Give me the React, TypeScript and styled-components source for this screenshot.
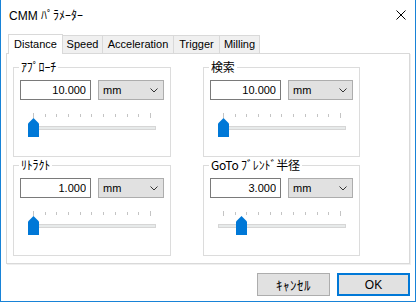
import React from "react";
import styled, { createGlobalStyle } from "styled-components";

const GlobalStyle = createGlobalStyle`
  html, body { margin: 0; padding: 0; background: #fff; }
  body {
    font-family: "Liberation Sans", "Noto Sans CJK JP", sans-serif;
    font-size: 11px;
    color: #000;
  }
  * { box-sizing: border-box; }
`;

const Window = styled.div`
  width: 416px;
  height: 302px;
  background: #fff;
  border: 1px solid #1883d7;
  border-top: none;
  display: flex;
  flex-direction: column;
`;

const TitleBar = styled.div`
  height: 34px;
  display: flex;
  justify-content: space-between;
  align-items: flex-start;
  padding: 8px 9px 0 8px;
  line-height: 16px;
  font-size: 12px;
`;

const CloseIcon = styled.svg`
  margin-top: 2px;
  display: block;
`;

const Body = styled.div`
  flex: 1;
  display: flex;
  flex-direction: column;
  padding: 0 5px;
`;

const TabStrip = styled.div`
  display: flex;
  align-items: flex-end;
  height: 19px;
  padding-left: 2px;
`;

const Tab = styled.div<{ $w: number; $active?: boolean }>`
  width: ${(p) => p.$w}px;
  height: ${(p) => (p.$active ? 20 : 18)}px;
  margin-bottom: ${(p) => (p.$active ? -1 : 0)}px;
  background: ${(p) => (p.$active ? "#fff" : "#f0f0f0")};
  border-top: 1px solid #d9d9d9;
  border-right: 1px solid #d9d9d9;
  border-left: ${(p) => (p.$active ? "1px solid #d9d9d9" : "none")};
  position: relative;
  z-index: ${(p) => (p.$active ? 1 : 0)};
  text-align: center;
  line-height: 16px;
  padding-top: ${(p) => (p.$active ? 1 : 0)}px;
  white-space: nowrap;
`;

const Panel = styled.div`
  height: 211px;
  border: 1px solid #d9d9d9;
  box-shadow: 1px 1px 0 #efefef;
  padding: 13px 0 0 6px;
  display: grid;
  grid-template-columns: 158px 157px;
  grid-template-rows: 90px 91px;
  column-gap: 32px;
  row-gap: 8px;
`;

const Group = styled.div`
  border: 1px solid #dcdcdc;
  display: flex;
  flex-direction: column;
  padding: 0 6px;
`;

const GroupTitle = styled.div`
  align-self: flex-start;
  margin: -8px 0 0 -1px;
  padding: 0 2px;
  background: #fff;
  line-height: 14px;
  font-size: 12px;
  font-family: "Noto Sans CJK JP", sans-serif;
  letter-spacing: -0.2px;
  white-space: nowrap;
`;

const InputRow = styled.div`
  display: flex;
  gap: 7px;
  margin-top: 6px;
`;

const NumberBox = styled.input`
  width: 71px;
  height: 20px;
  border: 1px solid #7a7a7a;
  background: #fff;
  font: inherit;
  color: #000;
  text-align: right;
  padding: 0 4px 0 0;
  margin: 0;
  outline: none;
`;

const Select = styled.div`
  width: 67px;
  height: 20px;
  border: 1px solid #adadad;
  background: #e1e1e1;
  display: flex;
  align-items: center;
  justify-content: space-between;
  padding: 0 5px 0 4px;
  line-height: 18px;
`;

const SliderBox = styled.div`
  position: relative;
  width: 128px;
  height: 25px;
  margin: 12px 0 0 8px;
`;

const Ticks = styled.div`
  display: flex;
  justify-content: space-between;
  align-items: center;
  height: 6px;
  padding: 0 5px;
`;

const Tick = styled.div<{ $end?: boolean }>`
  width: 1px;
  height: ${(p) => (p.$end ? 5 : 3)}px;
  background: #c4c4c4;
`;

const Track = styled.div`
  margin-top: 8px;
  height: 4px;
  background: #e7eaea;
  border: 1px solid #d6d6d6;
`;

const Thumb = styled.svg`
  position: absolute;
  top: 6px;
  display: block;
`;

const Footer = styled.div`
  display: flex;
  justify-content: flex-end;
  gap: 7px;
  margin-top: 9px;
`;

const Button = styled.div<{ $primary?: boolean }>`
  width: 73px;
  height: 23px;
  background: #e1e1e1;
  border: ${(p) => (p.$primary ? "2px solid #0078d7" : "1px solid #adadad")};
  display: flex;
  align-items: center;
  justify-content: center;
  font-size: 12px;
`;

const KanaLabel = styled.span`
  font-family: "Noto Sans CJK JP", sans-serif;
  font-size: 13px;
  letter-spacing: 0.5px;
`;

type Param = { title: string; value: string; pos: number };

const params: Param[] = [
  { title: "ｱﾌﾟﾛｰﾁ", value: "10.000", pos: 0 },
  { title: "検索", value: "10.000", pos: 0 },
  { title: "ﾘﾄﾗｸﾄ", value: "1.000", pos: 0 },
  { title: "GoTo ﾌﾞﾚﾝﾄﾞ半径", value: "3.000", pos: 0.154 },
];

const tabs: { label: string; w: number }[] = [
  { label: "Distance", w: 55 },
  { label: "Speed", w: 40 },
  { label: "Acceleration", w: 71 },
  { label: "Trigger", w: 46 },
  { label: "Milling", w: 40 },
];

function Slider({ pos }: { pos: number }) {
  return (
    <SliderBox>
      <Ticks>
        {Array.from({ length: 11 }).map((_, i) => (
          <Tick key={i} $end={i === 0 || i === 10} />
        ))}
      </Ticks>
      <Track />
      <Thumb width="11" height="19" viewBox="0 0 11 19" style={{ left: Math.round(pos * 117) }}>
        <polygon points="5.5,0 11,5.5 11,19 0,19 0,5.5" fill="#0078d7" />
      </Thumb>
    </SliderBox>
  );
}

function ParamGroup({ p }: { p: Param }) {
  return (
    <Group>
      <GroupTitle>{p.title}</GroupTitle>
      <InputRow>
        <NumberBox readOnly value={p.value} />
        <Select>
          <span>mm</span>
          <svg width="8" height="5" viewBox="0 0 8 5">
            <polyline points="0.5,0.5 4,4 7.5,0.5" fill="none" stroke="#333" strokeWidth="1" />
          </svg>
        </Select>
      </InputRow>
      <Slider pos={p.pos} />
    </Group>
  );
}

export default function App() {
  return (
    <>
      <GlobalStyle />
      <Window>
        <TitleBar>
          <span>CMM ﾊﾟﾗﾒｰﾀｰ</span>
          <CloseIcon width="10" height="10" viewBox="0 0 10 10">
            <path d="M0.5 0.5 L9.5 9.5 M9.5 0.5 L0.5 9.5" stroke="#000" strokeWidth="1" />
          </CloseIcon>
        </TitleBar>
        <Body>
          <TabStrip>
            {tabs.map((t, i) => (
              <Tab key={t.label} $w={t.w} $active={i === 0}>
                {t.label}
              </Tab>
            ))}
          </TabStrip>
          <Panel>
            {params.map((p) => (
              <ParamGroup key={p.title} p={p} />
            ))}
          </Panel>
          <Footer>
            <Button>
              <KanaLabel>ｷｬﾝｾﾙ</KanaLabel>
            </Button>
            <Button $primary>OK</Button>
          </Footer>
        </Body>
      </Window>
    </>
  );
}
